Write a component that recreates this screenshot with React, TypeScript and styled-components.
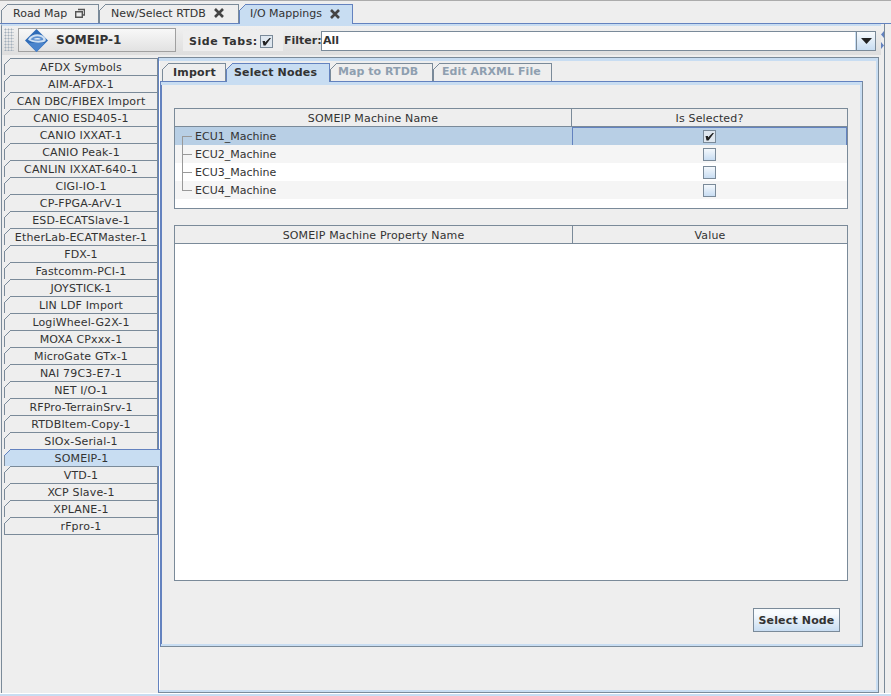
import styled, { createGlobalStyle } from 'styled-components';

const GlobalStyle = createGlobalStyle`
  html, body {
    margin: 0;
    padding: 0;
    background: #eeeeee;
  }
  * {
    box-sizing: border-box;
  }
`;

const Page = styled.div`
  width: 891px;
  height: 696px;
  overflow: hidden;
  display: flex;
  flex-direction: column;
  background: #eeeeee;
  border-top: 1px solid #ababab;
  color: #333333;
  font-family: 'DejaVu Sans', sans-serif;
  font-size: 11px;
`;

const TabStrip = styled.div`
  display: flex;
  height: 19px;
  margin-top: 3px;
  padding-left: 1px;
  flex: none;
`;

const corner = `
  &::before {
    content: '';
    position: absolute;
    left: -1px;
    top: -1px;
    width: 7px;
    height: 7px;
    background: linear-gradient(
      135deg,
      #eeeeee 0,
      #eeeeee 47%,
      currentColor 47%,
      currentColor 57%,
      transparent 57%
    );
  }
`;

const TopTab = styled.div<{ $active?: boolean; $width: number }>`
  position: relative;
  display: flex;
  align-items: center;
  width: ${({ $width }) => $width}px;
  height: ${({ $active }) => ($active ? 20 : 19)}px;
  padding: 0 0 2px ${({ $active }) => ($active ? 10 : 11)}px;
  gap: 8px;
  color: ${({ $active }) => ($active ? '#6382bf' : '#7a8a99')};
  background: ${({ $active }) => ($active ? '#c8ddf2' : '#eeeeee')};
  border: 1px solid currentColor;
  border-bottom: 0;
  z-index: ${({ $active }) => ($active ? 2 : 1)};
  ${corner}
`;

const TopTabLabel = styled.span`
  color: #333333;
  white-space: nowrap;
`;

const TabIcon = styled.svg`
  width: 10px;
  height: 10px;
  flex: none;
`;

const Frame = styled.div`
  flex: 1;
  min-height: 0;
  display: flex;
  border-top: 1px solid #6382bf;
  border-bottom: 1px solid #ffffff;
`;

const Footer = styled.div`
  height: 2px;
  flex: none;
  background: #c8ddf2;
`;

const Content = styled.div`
  width: 880px;
  margin-left: 1px;
  display: flex;
  flex-direction: column;
  border-left: 1px solid #7a8a99;
  border-top: 2px solid #c8ddf2;
`;

const SplitBar = styled.div`
  width: 3px;
  padding-top: 7px;
  display: flex;
  flex-direction: column;
  gap: 4px;
  align-items: flex-start;
`;

const Strip = styled.div`
  flex: 1;
  border-left: 1px solid #7a8a99;
`;

const Toolbar = styled.div`
  display: flex;
  align-items: flex-start;
  height: 29px;
  flex: none;
  padding: 2px 0 0 2px;
  background: linear-gradient(#f0f0f0, #dedede);
`;

const Grip = styled.div`
  width: 10px;
  height: 23px;
  margin-right: 4px;
  background-image: radial-gradient(#a3afbb 0.8px, transparent 1.2px);
  background-size: 3px 3px;
`;

const NodeButton = styled.div`
  width: 158px;
  height: 24px;
  padding-left: 6px;
  display: flex;
  align-items: center;
  gap: 8px;
  background: linear-gradient(#f8f8f8, #e2e2e2);
  border: 1px solid #a0a0a0;
  font-size: 12px;
  font-weight: bold;
`;

const SideTabsToggle = styled.div`
  width: 100px;
  height: 20px;
  margin: 3px 0 0 7px;
  padding-left: 6px;
  display: flex;
  align-items: center;
  gap: 2px;
  background: #eeeeee;
  font-weight: bold;
  letter-spacing: 0.55px;
  white-space: nowrap;
`;

const CheckBox = styled.span<{ $checked?: boolean }>`
  width: 13px;
  height: 13px;
  flex: none;
  display: inline-flex;
  align-items: center;
  justify-content: center;
  border: 1px solid #7a8a99;
  background: ${({ $checked }) =>
    $checked ? '#dfe7ef' : 'linear-gradient(#f4f8fc, #c8ddf2)'};
`;

const FilterLabel = styled.span`
  width: 38px;
  margin-top: 6px;
  padding-left: 1px;
  font-weight: bold;
  white-space: nowrap;
`;

const Combo = styled.div`
  width: 555px;
  height: 20px;
  margin-top: 3px;
  display: flex;
  border: 1px solid #7a8a99;
  background: #ffffff;
`;

const ComboValue = styled.div`
  flex: 1;
  padding-left: 1px;
  line-height: 17px;
  font-weight: bold;
  border-right: 1px solid #c8ddf2;
`;

const ComboArrow = styled.div`
  width: 19px;
  display: flex;
  align-items: center;
  justify-content: center;
  background: linear-gradient(#f8fbfd, #c8ddf2);
  border-left: 1px solid #7a8a99;
`;

const Body = styled.div`
  flex: 1;
  display: flex;
  min-height: 0;
  padding-top: 2px;
`;

const SideTabs = styled.div`
  width: 156px;
  flex: none;
  padding: 1px 0 0 2px;
`;

const SideTab = styled.div<{ $active?: boolean }>`
  position: relative;
  width: ${({ $active }) => ($active ? 156 : 154)}px;
  height: 17px;
  padding-right: ${({ $active }) => ($active ? 2 : 0)}px;
  display: flex;
  align-items: center;
  justify-content: center;
  letter-spacing: 0.15px;
  white-space: nowrap;
  color: ${({ $active }) => ($active ? '#6382bf' : '#7a8a99')};
  background: ${({ $active }) => ($active ? '#c8ddf2' : '#eeeeee')};
  border-top: 1px solid currentColor;
  border-left: 1px solid #7a8a99;
  border-right: ${({ $active }) => ($active ? 0 : '1px solid #7a8a99')};
  z-index: ${({ $active }) => ($active ? 2 : 1)};
  ${corner}

  &:last-child {
    height: 18px;
    border-bottom: 1px solid #7a8a99;
  }
`;

const SideTabLabel = styled.span`
  color: #333333;
`;

const MainPanel = styled.div`
  width: 721px;
  height: 636px;
  flex: none;
  display: flex;
  flex-direction: column;
  padding: 5px 15px 0 1px;
  border: 1px solid #6382bf;
  border-color: #7a8a99 #7a8a99 #7a8a99 #6382bf;
  box-shadow: inset -2px -2px 0 #c8ddf2, inset 0 3px 0 #c8ddf2, inset 1px 0 0 #ffffff;
`;

const InnerTabs = styled.div`
  display: flex;
  height: 18px;
  padding-left: 2px;
  flex: none;
`;

const InnerTab = styled.div<{ $active?: boolean; $width: number; $inset: number }>`
  position: relative;
  width: ${({ $width }) => $width}px;
  height: ${({ $active }) => ($active ? 19 : 18)}px;
  padding-left: ${({ $inset }) => $inset}px;
  line-height: 15px;
  font-weight: bold;
  white-space: nowrap;
  color: ${({ $active }) => ($active ? '#6382bf' : '#7a8a99')};
  background: ${({ $active }) => ($active ? '#c8ddf2' : '#eeeeee')};
  border: 1px solid currentColor;
  border-bottom: 0;
  z-index: ${({ $active }) => ($active ? 2 : 1)};
  ${corner}
`;

const InnerTabText = styled.span<{ $disabled?: boolean }>`
  color: ${({ $disabled }) => ($disabled ? '#8e9fb0' : '#333333')};
  letter-spacing: ${({ $disabled }) => ($disabled ? 0.05 : 0.2)}px;
  position: relative;
  top: ${({ $disabled }) => ($disabled ? 0 : 1)}px;
`;

const InnerPanel = styled.div`
  width: 703px;
  height: 566px;
  display: flex;
  flex-direction: column;
  padding: 26px 13px 0 13px;
  border: 1px solid #6382bf;
  border-color: #6382bf #7a8a99 #7a8a99 #6382bf;
  box-shadow: inset -2px -2px 0 #c8ddf2, inset 0 3px 0 #c8ddf2, inset 1px 0 0 #6382bf;
`;

const TableBox = styled.div<{ $height: number }>`
  width: 674px;
  height: ${({ $height }) => $height}px;
  flex: none;
  display: flex;
  flex-direction: column;
  background: #ffffff;
  border: 1px solid #7a8a99;
`;

const HeaderRow = styled.div<{ $split: number }>`
  display: grid;
  grid-template-columns: ${({ $split }) => $split}px 1fr;
  height: 18px;
  flex: none;
  background: #eeeeee;
  border-bottom: 1px solid #7a8a99;
`;

const HeaderCell = styled.div`
  display: flex;
  align-items: center;
  justify-content: center;
  padding-top: 1px;
  letter-spacing: 0.15px;
  white-space: nowrap;

  & + & {
    border-left: 1px solid #7a8a99;
  }
`;

const Row = styled.div<{ $selected?: boolean; $odd?: boolean }>`
  display: grid;
  grid-template-columns: 397px 1fr;
  height: 18px;
  flex: none;
  background: ${({ $selected, $odd }) =>
    $selected ? '#b8cfe5' : $odd ? '#f5f5f5' : '#ffffff'};
`;

const NameCell = styled.div`
  position: relative;
  padding: 1px 0 0 20px;
  line-height: 18px;
`;

const TreeLine = styled.span<{ $first?: boolean; $last?: boolean }>`
  position: absolute;
  left: 7px;
  top: ${({ $first }) => ($first ? '9px' : '0')};
  width: 10px;
  height: ${({ $first, $last }) => ($first ? '9px' : $last ? '10px' : '18px')};
  border-left: 1px solid #999999;

  &::after {
    content: '';
    position: absolute;
    left: 0;
    top: ${({ $first }) => ($first ? '0' : '9px')};
    width: 9px;
    border-top: 1px solid #999999;
  }
`;

const CheckCell = styled.div<{ $focused?: boolean }>`
  display: flex;
  align-items: center;
  justify-content: center;
  border: 1px solid ${({ $focused }) => ($focused ? '#6382bf' : 'transparent')};
`;

const Gap = styled.div`
  height: 16px;
  flex: none;
`;

const ActionRow = styled.div`
  display: flex;
  justify-content: flex-end;
  padding: 27px 9px 0 0;
`;

const ActionButton = styled.div`
  width: 87px;
  height: 24px;
  display: flex;
  align-items: center;
  justify-content: center;
  font-weight: bold;
  letter-spacing: 0.15px;
  background: linear-gradient(#f8fbfd 20%, #c8ddf2);
  border: 1px solid #7a8a99;
`;

const sideTabs = [
  'AFDX Symbols',
  'AIM-AFDX-1',
  'CAN DBC/FIBEX Import',
  'CANIO ESD405-1',
  'CANIO IXXAT-1',
  'CANIO Peak-1',
  'CANLIN IXXAT-640-1',
  'CIGI-IO-1',
  'CP-FPGA-ArV-1',
  'ESD-ECATSlave-1',
  'EtherLab-ECATMaster-1',
  'FDX-1',
  'Fastcomm-PCI-1',
  'JOYSTICK-1',
  'LIN LDF Import',
  'LogiWheel-G2X-1',
  'MOXA CPxxx-1',
  'MicroGate GTx-1',
  'NAI 79C3-E7-1',
  'NET I/O-1',
  'RFPro-TerrainSrv-1',
  'RTDBItem-Copy-1',
  'SIOx-Serial-1',
  'SOMEIP-1',
  'VTD-1',
  'XCP Slave-1',
  'XPLANE-1',
  'rFpro-1',
];

const machines = ['ECU1_Machine', 'ECU2_Machine', 'ECU3_Machine', 'ECU4_Machine'];

function CloseIcon() {
  return (
    <TabIcon viewBox="0 0 10 10">
      <path d="M1 1 L9 9 M9 1 L1 9" stroke="#444444" strokeWidth="2.6" />
    </TabIcon>
  );
}

function RestoreIcon() {
  return (
    <TabIcon viewBox="0 0 10 10">
      <path d="M3 1.5h6.5v5.5h-2" fill="none" stroke="#555555" strokeWidth="1.4" />
      <path d="M.7 3.7h6.6v5.6h-6.6z" fill="none" stroke="#555555" strokeWidth="1.4" />
    </TabIcon>
  );
}

function Tick() {
  return (
    <svg width="11" height="11" viewBox="0 0 11 11">
      <path d="M1.5 5 H4 V6.5 L8.5 2 H10 L4.5 9.5 H2.5 Z" fill="#222222" />
    </svg>
  );
}

function Logo() {
  return (
    <svg width="23" height="23" viewBox="0 0 23 23">
      <path d="M11.5 0 L23 11.5 L11.5 23 L0 11.5 Z" fill="#2f6cb8" />
      <path d="M11.5 14 L20 14 L11.5 23 L3 14 Z" fill="#4a84cc" />
      <path d="M3 10.5 C6 5.5 12 4.5 16 6 C20 7.5 21.5 10 20.5 12 C19 13.5 13 14.5 8 13 C5.5 12.3 3.8 11.5 3 10.5 Z" fill="#cfe0f2" />
      <path d="M5.5 10.5 C8 7 13 6.5 16 8 C18 9 18.5 10 18 11 C15 12.2 10 12 5.5 10.5 Z" fill="#5e90cf" />
      <path d="M8.5 10 C11 8.5 14 8.5 16 10 C13.5 10.8 11 10.8 8.5 10 Z" fill="#e6eff8" />
    </svg>
  );
}

function Arrow({ left }: { left?: boolean }) {
  return (
    <svg width="3" height="7" viewBox="0 0 3 7">
      <path d={left ? 'M3 0 V7 L0 3.5 Z' : 'M0 0 V7 L3 3.5 Z'} fill="#6382bf" />
    </svg>
  );
}

export default function App() {
  return (
    <Page>
      <GlobalStyle />
      <TabStrip>
        <TopTab $width={98}>
          <TopTabLabel>Road Map</TopTabLabel>
          <RestoreIcon />
        </TopTab>
        <TopTab $width={140}>
          <TopTabLabel>New/Select RTDB</TopTabLabel>
          <CloseIcon />
        </TopTab>
        <TopTab $active $width={114}>
          <TopTabLabel>I/O Mappings</TopTabLabel>
          <CloseIcon />
        </TopTab>
      </TabStrip>
      <Frame>
        <Content>
          <Toolbar>
            <Grip />
            <NodeButton>
              <Logo />
              SOMEIP-1
            </NodeButton>
            <SideTabsToggle>
              Side Tabs:
              <CheckBox $checked>
                <Tick />
              </CheckBox>
            </SideTabsToggle>
            <FilterLabel>Filter:</FilterLabel>
            <Combo>
              <ComboValue>All</ComboValue>
              <ComboArrow>
                <svg width="11" height="6" viewBox="0 0 11 6">
                  <path d="M0 0 H11 L5.5 6 Z" fill="#222222" />
                </svg>
              </ComboArrow>
            </Combo>
          </Toolbar>
          <Body>
            <SideTabs>
              {sideTabs.map((name) => (
                <SideTab key={name} $active={name === 'SOMEIP-1'}>
                  <SideTabLabel>{name}</SideTabLabel>
                </SideTab>
              ))}
            </SideTabs>
            <MainPanel>
              <InnerTabs>
                <InnerTab $width={64} $inset={10}>
                  <InnerTabText>Import</InnerTabText>
                </InnerTab>
                <InnerTab $active $width={104} $inset={7}>
                  <InnerTabText>Select Nodes</InnerTabText>
                </InnerTab>
                <InnerTab $width={103} $inset={7}>
                  <InnerTabText $disabled>Map to RTDB</InnerTabText>
                </InnerTab>
                <InnerTab $width={119} $inset={8}>
                  <InnerTabText $disabled>Edit ARXML File</InnerTabText>
                </InnerTab>
              </InnerTabs>
              <InnerPanel>
                <TableBox $height={101}>
                  <HeaderRow $split={396}>
                    <HeaderCell>SOMEIP Machine Name</HeaderCell>
                    <HeaderCell>Is Selected?</HeaderCell>
                  </HeaderRow>
                  {machines.map((name, i) => (
                    <Row key={name} $selected={i === 0} $odd={i % 2 === 1}>
                      <NameCell>
                        <TreeLine $first={i === 0} $last={i === machines.length - 1} />
                        {name}
                      </NameCell>
                      <CheckCell $focused={i === 0}>
                        <CheckBox $checked={i === 0}>{i === 0 && <Tick />}</CheckBox>
                      </CheckCell>
                    </Row>
                  ))}
                </TableBox>
                <Gap />
                <TableBox $height={356}>
                  <HeaderRow $split={397}>
                    <HeaderCell>SOMEIP Machine Property Name</HeaderCell>
                    <HeaderCell>Value</HeaderCell>
                  </HeaderRow>
                </TableBox>
                <ActionRow>
                  <ActionButton>Select Node</ActionButton>
                </ActionRow>
              </InnerPanel>
            </MainPanel>
          </Body>
        </Content>
        <SplitBar>
          <Arrow left />
          <Arrow />
        </SplitBar>
        <Strip />
      </Frame>
      <Footer />
    </Page>
  );
}
